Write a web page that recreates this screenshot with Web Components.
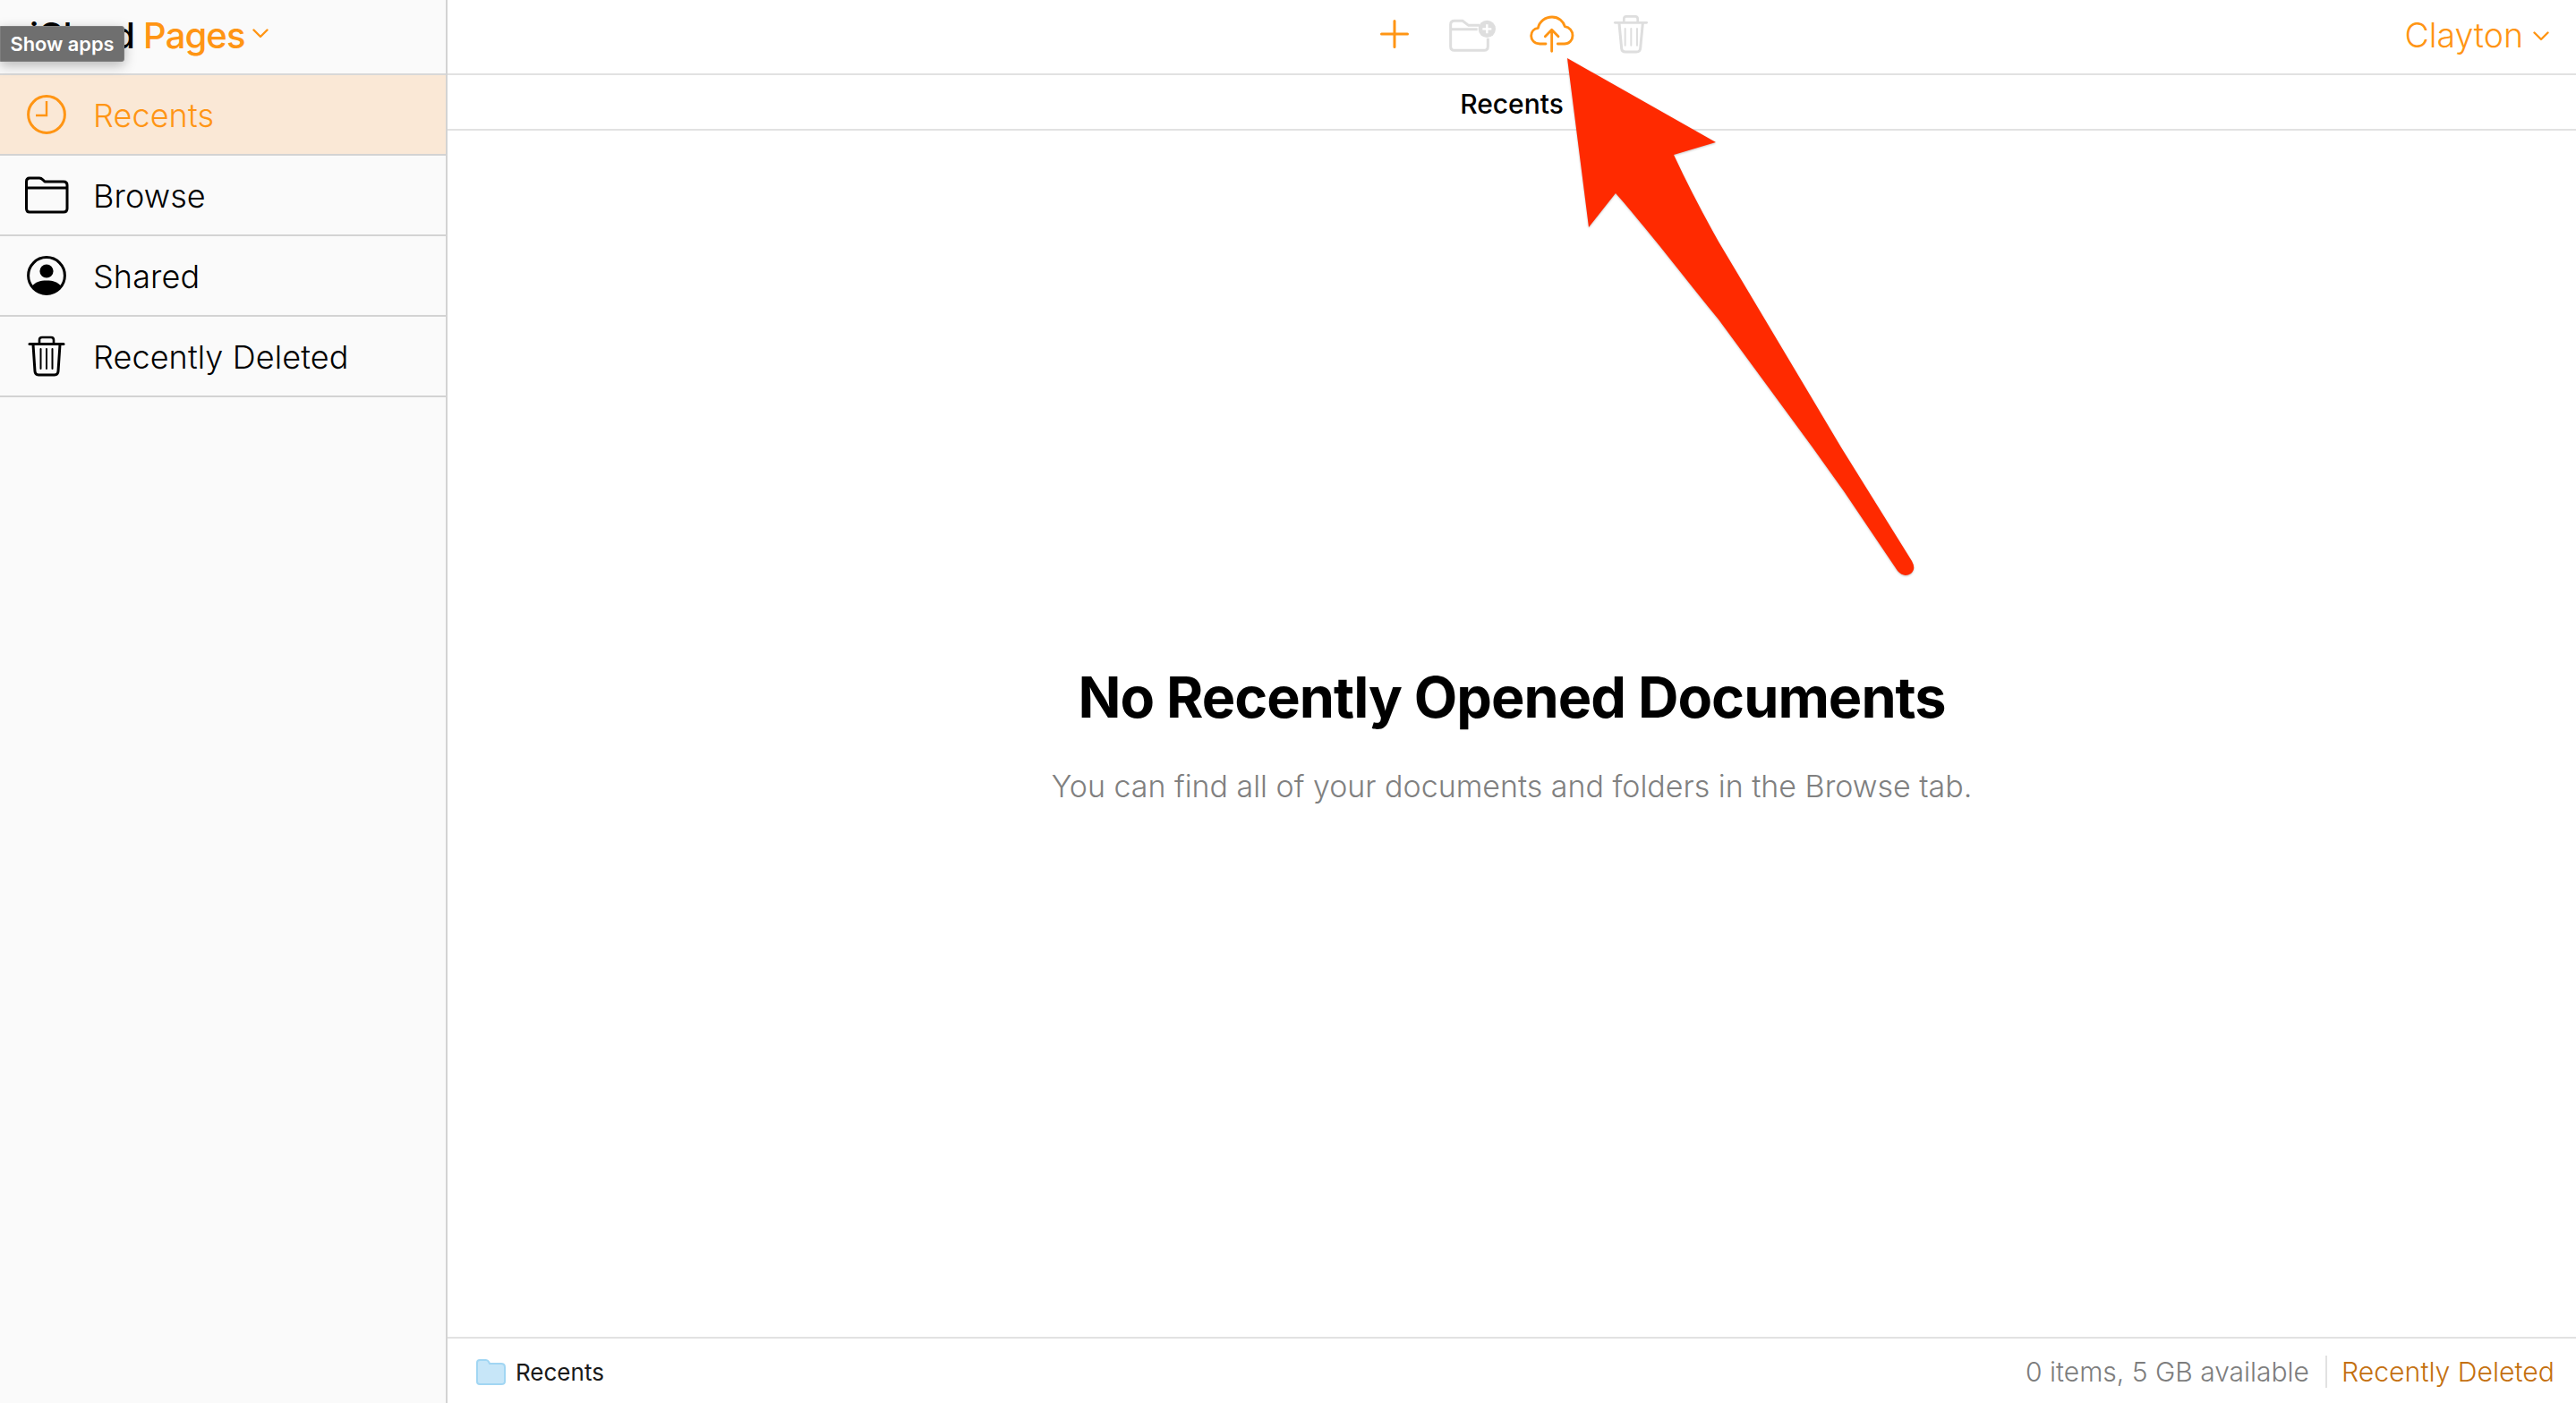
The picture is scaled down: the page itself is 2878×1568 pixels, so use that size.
<!DOCTYPE html>
<html lang="en">
<head>
<meta charset="utf-8">
<title>iCloud Pages</title>
<style>
html,body{margin:0;padding:0;width:2878px;height:1568px;overflow:hidden;background:#fff;font-family:Inter,"Liberation Sans",sans-serif;color:#000}
</style>
</head>
<body>
<app-shell>
  <app-sidebar slot="side">
    <app-brand slot="brand"></app-brand>
    <nav-item active label="Recents" icon="clock"></nav-item>
    <nav-item label="Browse" icon="folder"></nav-item>
    <nav-item label="Shared" icon="person"></nav-item>
    <nav-item label="Recently Deleted" icon="trash"></nav-item>
  </app-sidebar>
  <app-toolbar slot="main"></app-toolbar>
  <title-bar slot="main">Recents</title-bar>
  <empty-state slot="main" heading="No Recently Opened Documents" text="You can find all of your documents and folders in the Browse tab."></empty-state>
  <status-bar slot="main"></status-bar>
</app-shell>
<hover-tip>Show apps</hover-tip>
<red-arrow></red-arrow>
<script>
const ORANGE='#ff9514';
function def(name,html,init){
  customElements.define(name,class extends HTMLElement{
    constructor(){super();this.attachShadow({mode:'open'}).innerHTML=html;}
    connectedCallback(){if(init)init(this);}
  });
}
def('app-shell',`<style>
:host{display:flex;width:2878px;height:1568px}
.s{display:flex;width:500px;flex:none}
.m{display:flex;flex-direction:column;flex:1;min-width:0}
</style><div class="s"><slot name="side"></slot></div><div class="m"><slot name="main"></slot></div>`);

def('app-sidebar',`<style>
:host{display:flex;flex-direction:column;width:500px;box-sizing:border-box;background:#fafafa;border-right:2px solid #d3d3d3}
</style><slot name="brand"></slot><slot></slot>`);

def('app-brand',`<style>
:host{display:flex;align-items:center;box-sizing:border-box;border-bottom:2px solid #d8d8d8;height:84px;padding:0 0 4px 33px;font-size:40px;font-weight:500;letter-spacing:-.9px}
.p{color:${ORANGE};margin-left:10px}
svg{margin-left:8px;margin-top:-4px}
</style><span>iCloud</span><span class="p">Pages</span>
<svg width="18" height="11" viewBox="0 0 18 11" fill="none" stroke="${ORANGE}" stroke-width="2.4" stroke-linecap="round" stroke-linejoin="round"><path d="M1.5 1.5 9 9l7.5-7.5"/></svg>`);

const NAV={
clock:`<svg width="48" height="48" viewBox="0 0 48 48" fill="none" stroke="currentColor"><circle cx="24" cy="24" r="20.4" stroke-width="3"/><path d="M24 9V25H12" stroke-width="2.4"/></svg>`,
folder:`<svg width="50" height="42" viewBox="0 0 50 42" fill="none" stroke="currentColor" stroke-width="3" stroke-linejoin="round"><path d="M2.5 36V6Q2.5 2 6 2H17Q19 2 21 4L23 6H44Q48 6 48 10V36Q48 40 44 40H6Q2.5 40 2.5 36Z"/><path d="M2.5 13H48"/></svg>`,
person:`<svg width="48" height="48" viewBox="0 0 48 48"><circle cx="24" cy="24" r="20.4" fill="none" stroke="currentColor" stroke-width="3"/><circle cx="24" cy="19" r="7.6" fill="currentColor"/><path d="M8 36C11 31 17 29.5 24 29.5S37 31 40 36C36 41 30 44 24 44S12 41 8 36Z" fill="currentColor"/></svg>`,
trash:`<svg width="42" height="46" viewBox="0 0 42 46" fill="none" stroke="currentColor" stroke-linecap="round"><path d="M2 9.5H40" stroke-width="3"/><path d="M13 9V5Q13 2 16 2H26Q29 2 29 5V9" stroke-width="2.6"/><path d="M6 10 8 40Q8.300 44 12 44H30Q33.700 44 34 40L36 10" stroke-width="3"/><path d="M14.500 15V37M21 15V37M27.500 15V37" stroke-width="2"/></svg>`
};
def('nav-item',`<style>
:host{display:flex;align-items:center;height:90px;box-sizing:border-box;border-bottom:2px solid #d3d3d3;font-size:36px;font-weight:300;color:#000}
:host([active]){background:#fae8d6;color:${ORANGE}}
.i{width:104px;flex:none;display:flex;justify-content:center;box-sizing:border-box;padding-right:0}
.l{letter-spacing:.1px;padding-top:2px}
</style><span class="i"></span><span class="l"></span>`,el=>{
  el.shadowRoot.querySelector('.i').innerHTML=NAV[el.getAttribute('icon')];
  el.shadowRoot.querySelector('.l').textContent=el.getAttribute('label');
});

def('app-toolbar',`<style>
:host{display:flex;align-items:center;height:84px;box-sizing:border-box;border-bottom:2px solid #e2e2e2;position:relative;padding-right:30px;justify-content:flex-end}
.c{position:absolute;left:2px;right:0;top:0;height:76px;display:flex;justify-content:center;align-items:center}
.b{width:88px;display:flex;justify-content:center;align-items:center;height:76px}
.u{display:flex;align-items:center;color:${ORANGE};font-size:37.5px;font-weight:300;padding-bottom:4px}
.u svg{margin-left:11px;margin-top:2px}
</style>
<div class="c">
<div class="b"><svg width="32" height="32" viewBox="0 0 32 32" stroke="${ORANGE}" stroke-width="3" stroke-linecap="round"><path d="M16 1.500V30.500M1.500 16H30.500"/></svg></div>
<div class="b"><svg width="54" height="40" viewBox="360 48 162 120" fill="none" stroke="#dedede" stroke-width="9"><path d="M365 92V76Q365 64 378 64H405L425 79H462M365 92H455M365 92V150Q365 163 378 163H477Q490 163 490 150V122"/><circle cx="487" cy="91" r="29" fill="#dedede" stroke="none"/><path d="M487 76V106M472 91H502" stroke="#fff" stroke-width="7"/></svg></div>
<div class="b"><svg width="50" height="42" viewBox="628 42 150 126" fill="none" stroke="${ORANGE}" stroke-width="8.500" stroke-linecap="round" stroke-linejoin="round"><path d="M682 138H662C643 138 633 124 633 111C633 97 643 87 656 85C661 63 680 48 703 48C725 48 741 62 746 80C762 82 772 96 772 110C772 125 761 138 744 138H722"/><path d="M702 163V92M680 113 702 91 724 113"/></svg></div>
<div class="b"><svg width="40" height="44" viewBox="910 42 118 132" fill="none" stroke="#dedede" stroke-linecap="round"><path d="M916 70H1022" stroke-width="8"/><path d="M946 68V57Q946 49 954 49H984Q992 49 992 57V68" stroke-width="8"/><path d="M930 72 938 156Q939 168 951 168H988Q1000 168 1001 156L1009 72" stroke-width="9"/><path d="M950 90V146M970 90V146M990 90V146" stroke-width="6"/></svg></div>
</div>
<div class="u"><span>Clayton</span><svg width="18" height="11" viewBox="0 0 18 11" fill="none" stroke="${ORANGE}" stroke-width="2.400" stroke-linecap="round" stroke-linejoin="round"><path d="M1.500 1.500 9 9l7.500-7.500"/></svg></div>`);

def('title-bar',`<style>
:host{display:flex;align-items:center;justify-content:center;height:62px;box-sizing:border-box;border-bottom:2px solid #e2e2e2;font-size:30px;font-weight:500;padding-top:4px}
</style><slot></slot>`);

def('empty-state',`<style>
:host{display:flex;flex-direction:column;align-items:center;flex:1;box-sizing:border-box;padding-top:595px}
h1{margin:0;font-size:63px;line-height:76px;font-weight:700;letter-spacing:-1px;color:#000}
p{margin:42px 0 0;font-size:34px;line-height:40px;font-weight:300;color:#808080;letter-spacing:-.02px}
</style><h1></h1><p></p>`,el=>{
  el.shadowRoot.querySelector('h1').textContent=el.getAttribute('heading');
  el.shadowRoot.querySelector('p').textContent=el.getAttribute('text');
});

def('status-bar',`<style>
:host{display:flex;align-items:center;height:74px;box-sizing:border-box;border-top:2px solid #e2e2e2;padding:2px 24px 0 32px}
svg{flex:none}
.r{margin-left:11px;font-size:26px;font-weight:400;color:#1a1a1a}
.sp{flex:1}
.a{font-size:30px;font-weight:300;color:#7d7d7d}
.d{width:2px;height:36px;background:#e2e2e2;margin:0 16px 0 18px}
.t{font-size:30.2px;font-weight:300;color:#c4700f}
</style>
<svg width="33" height="29" viewBox="0 0 33 29"><path d="M1 25V4Q1 1 4 1H11Q13 1 14 3L15 5H28Q32 5 32 9V25Q32 28 28 28H4Q1 28 1 25Z" fill="#c7e6f8" stroke="#a1d6f3" stroke-width="2"/></svg>
<span class="r">Recents</span><span class="sp"></span>
<span class="a">0 items, 5 GB available</span><span class="d"></span><span class="t">Recently Deleted</span>`);

def('hover-tip',`<style>
:host{position:absolute;left:0;top:29px;width:139px;height:40px;box-sizing:border-box;background:#6f6f6f;border:1px solid #7d7d7d;border-radius:0 3px 3px 0;box-shadow:0 4px 14px rgba(0,0,0,.28);color:#fff;font-size:21.8px;font-weight:600;display:flex;align-items:center;justify-content:center;white-space:nowrap;padding-bottom:1px}
</style><slot></slot>`);

def('red-arrow',`<style>
:host{position:absolute;left:1740px;top:50px;width:410px;height:610px;display:block}
svg{display:block;overflow:visible;filter:drop-shadow(0 1px 1px rgba(0,0,0,.22))}
</style>
<svg width="410" height="610" viewBox="1740 50 410 610"><path fill="#ff2a00" d="M1751 65 1917 159 1870 173C1885 205 1902 238 1920 270L2057 500L2136 627Q2141 636 2135 641Q2127 646 2120 638L2060 549L2025 500L1920 357C1880 308 1842 258 1805 216L1775 254Z"/></svg>`);
</script>
</body>
</html>
